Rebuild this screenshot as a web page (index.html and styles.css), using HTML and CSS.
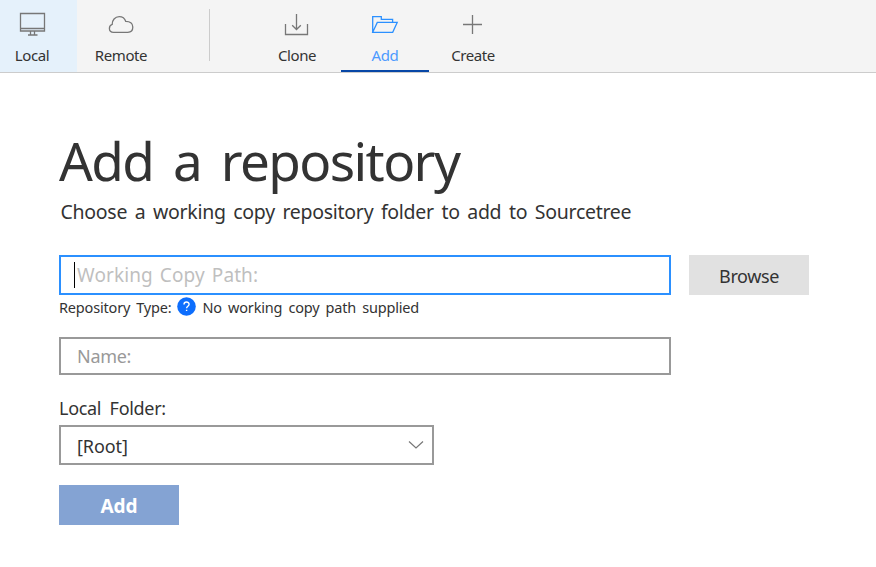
FILE: index.html
```html
<!DOCTYPE html>
<html lang="en">
<head>
<meta charset="utf-8">
<title>Add a repository</title>
<link rel="stylesheet" href="styles.css">
</head>
<body>
<nav class="toolbar">
  <a class="tab current">
    <svg class="icon" width="32" height="32" viewBox="0 0 32 32"><path d="M4.500 5.500h24v17.500h-24zM4.500 20.500h24M14.500 23v4M18.500 23v4M12 27h9.500"/></svg>
    <span>Local</span>
  </a>
  <a class="tab">
    <svg class="icon" width="32" height="32" viewBox="0 0 32 32"><path d="M8.500 24.300C5.800 24.300 4.400 22.600 4.400 20.500c0-2.200 1-3.600 2.800-4.100C7 12.300 10 8.600 14.200 8.600c3.200 0 5.600 1.800 6.500 4.700 4.300-.1 7.100 2.300 7.100 5.700 0 3.200-2.100 5.300-5 5.300z"/></svg>
    <span>Remote</span>
  </a>
  <i class="separator"></i>
  <a class="tab">
    <svg class="icon" width="32" height="32" viewBox="0 0 32 32"><path d="M4.500 16v10.500h22V16M15.500 6v15.500M11.200 17.200l4.300 4.300 4.300-4.300"/></svg>
    <span>Clone</span>
  </a>
  <a class="tab active">
    <svg class="icon" width="32" height="32" viewBox="0 0 32 32"><path d="M3.700 24.300V8.700h8.600v2.700h11.300v3M3.700 24.300h20l4.500-9.900H8.300z"/></svg>
    <span>Add</span>
  </a>
  <a class="tab">
    <svg class="icon" width="32" height="32" viewBox="0 0 32 32"><path d="M15.500 7v19M6 16.500h19"/></svg>
    <span>Create</span>
  </a>
</nav>
<main class="page">
  <h1>Add a repository</h1>
  <p class="subtitle">Choose a working copy repository folder to add to Sourcetree</p>
  <div class="path-row">
    <div class="field focused"><i class="caret"></i><span>Working Copy Path:</span></div>
    <button class="browse">Browse</button>
  </div>
  <div class="status">
    <span>Repository Type:</span>
    <svg class="help" width="19" height="19" viewBox="0 0 19 19"><circle cx="9.500" cy="9.500" r="9.300"/><path d="M7 7.400C7 4.300 12.100 4.300 12.100 7.300c0 1.900-2.500 1.900-2.500 3.900M9.600 12.700v1.400"/></svg>
    <span>No working copy path supplied</span>
  </div>
  <div class="field name"><span>Name:</span></div>
  <div class="label">Local Folder:</div>
  <div class="field select"><span>[Root]</span>
    <svg class="chevron" width="16" height="10" viewBox="0 0 16 10"><path d="M1 1.500l7 6.500 7-6.500"/></svg>
  </div>
  <button class="submit">Add</button>
</main>
</body>
</html>
```
FILE: styles.css
```css
* { box-sizing: border-box; }
body {
  margin: 0;
  background: #fff;
  color: #333;
  font-family: "Noto Sans", sans-serif;
  overflow: hidden;
}
.toolbar {
  display: flex;
  height: 73px;
  background: #f4f4f4;
  border-bottom: 1px solid #ccc;
}
.tab {
  display: flex;
  flex-direction: column;
  align-items: center;
  flex: none;
  width: 88px;
  height: 72px;
  padding-top: 8px;
  font-size: 15px;
  line-height: 20px;
  letter-spacing: -0.4px;
}
.tab span { margin-top: 5px; }
.current { margin-left: -11px; padding-right: 2px; background: #e5f1fb; }
.active { color: #4c9aff; border-bottom: 2px solid #0747a6; }
.icon { flex: none; fill: none; stroke: #777; stroke-width: 1.3; }
.active .icon { stroke: #2b90ff; }
.separator { width: 1px; height: 52px; margin: 9px 43px 0 44px; background: #ccc; }
.page { padding: 52px 0 0 59px; }
h1 {
  margin: 0;
  font-size: 53px;
  line-height: 72px;
  font-weight: 400;
  letter-spacing: -1.6px;
  word-spacing: 7.5px;
}
.subtitle {
  margin: 1px 0 0 1.5px;
  font-size: 19.500px;
  line-height: 28px;
  letter-spacing: -0.28px;
  word-spacing: 2.800px;
}
.path-row { display: flex; gap: 18px; margin-top: 29px; }
.field {
  display: flex;
  align-items: center;
  width: 612px;
  height: 40px;
  border: 2px solid #999;
  padding-left: 16px;
  font-size: 18px;
  letter-spacing: -0.3px;
}
.focused {
  border-color: #2b90ff;
  padding-left: 13px;
  color: #bfbfbf;
  font-size: 19px;
  letter-spacing: 0.1px;
  word-spacing: 2px;
}
.caret { width: 1px; height: 26px; margin-right: 2px; background: #000; }
button {
  width: 120px;
  height: 40px;
  padding: 2px 0 0;
  border: 0;
  font-family: inherit;
}
.browse { background: #e1e1e1; color: #333; font-size: 18px; letter-spacing: -0.4px; }
.status {
  display: flex;
  align-items: center;
  height: 24px;
  font-size: 14.500px;
  letter-spacing: -0.18px;
  word-spacing: 2.500px;
}
.help { margin: -2px 7px 0 5px; fill: #0d6efd; }
.help path { fill: none; stroke: #fff; stroke-width: 1.4; }
.name { height: 38px; margin-top: 18px; color: #999; }
.label {
  margin-top: 19px;
  height: 31px;
  font-size: 18px;
  line-height: 28px;
  letter-spacing: -0.3px;
  word-spacing: 4px;
}
.select { width: 375px; justify-content: space-between; padding-right: 8px; letter-spacing: -0.1px; }
.select span { padding-top: 2px; }
.chevron { fill: none; stroke: #777; stroke-width: 1.2; }
.submit {
  display: block;
  margin-top: 20px;
  background: #84a3d3;
  color: #fff;
  font-size: 19px;
  font-weight: 700;
}
```
